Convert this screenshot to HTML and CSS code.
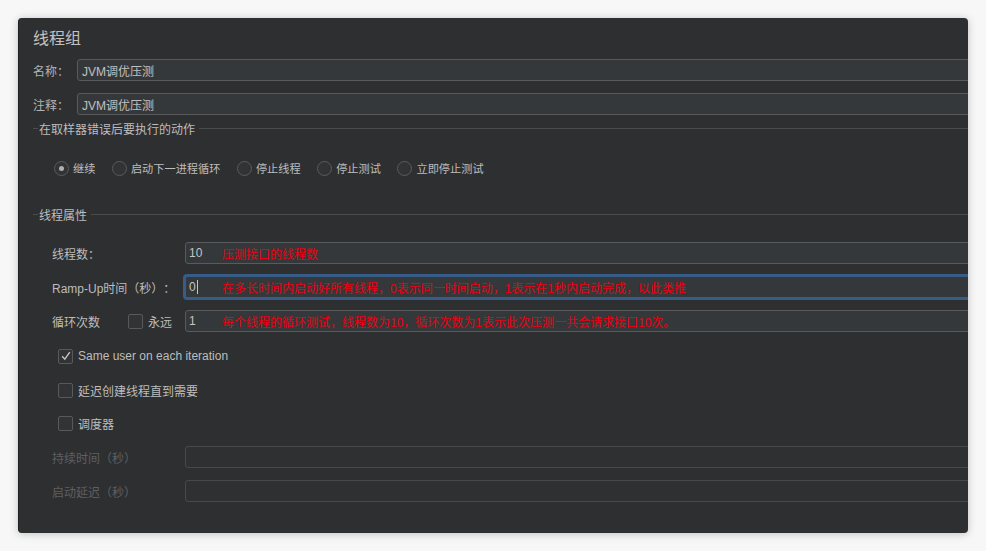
FILE: index.html
```html
<!DOCTYPE html>
<html lang="zh-CN">
<head>
<meta charset="utf-8">
<title>线程组</title>
<link rel="stylesheet" href="styles.css">
</head>
<body>
<div class="window">
  <div class="title">线程组</div>

  <div class="row row-name">
    <span class="label">名称：</span>
    <div class="field"><span class="val">JVM调优压测</span></div>
  </div>
  <div class="row row-comment">
    <span class="label">注释：</span>
    <div class="field"><span class="val">JVM调优压测</span></div>
  </div>

  <div class="legend legend-1"><span class="dash"></span><span class="legend-text">在取样器错误后要执行的动作</span><span class="line"></span></div>

  <div class="radios">
    <span class="radio on"></span><span class="rtext">继续</span>
    <span class="radio"></span><span class="rtext">启动下一进程循环</span>
    <span class="radio"></span><span class="rtext">停止线程</span>
    <span class="radio"></span><span class="rtext">停止测试</span>
    <span class="radio"></span><span class="rtext">立即停止测试</span>
  </div>

  <div class="legend legend-2"><span class="dash"></span><span class="legend-text">线程属性</span><span class="line"></span></div>

  <div class="prow prow-1">
    <span class="plabel">线程数：</span>
    <div class="field pfield"><span class="num">10</span><span class="note">压测接口的线程数</span></div>
  </div>
  <div class="prow prow-2">
    <span class="plabel">Ramp-Up时间（秒）：</span>
    <div class="field pfield focus"><span class="num">0<span class="caret"></span></span><span class="note">在多长时间内启动好所有线程，0表示同一时间启动，1表示在1秒内启动完成，以此类推</span></div>
  </div>
  <div class="prow prow-3">
    <span class="plabel short">循环次数</span>
    <span class="check"></span><span class="ctext forever">永远</span>
    <div class="field pfield"><span class="num">1</span><span class="note">每个线程的循环测试，线程数为10，循环次数为1表示此次压测一共会请求接口10次。</span></div>
  </div>

  <div class="crow crow-1"><span class="check checked"><svg width="12" height="12" viewBox="0 0 12 12"><path d="M2.2 6.3 L4.8 9.2 L9.8 2.2" fill="none" stroke="#c4c4c4" stroke-width="1.4"/></svg></span><span class="ctext">Same user on each iteration</span></div>
  <div class="crow crow-2"><span class="check"></span><span class="ctext">延迟创建线程直到需要</span></div>
  <div class="crow crow-3"><span class="check"></span><span class="ctext">调度器</span></div>

  <div class="prow drow drow-1">
    <span class="plabel disabled">持续时间（秒）</span>
    <div class="field pfield dfield"></div>
  </div>
  <div class="prow drow drow-2">
    <span class="plabel disabled">启动延迟（秒）</span>
    <div class="field pfield dfield"></div>
  </div>
</div>
</body>
</html>
```

FILE: styles.css
```css
* { box-sizing: border-box; }
html, body { margin: 0; padding: 0; }
body {
  background: #f7f7f7;
  font-family: "Liberation Sans", "Noto Sans CJK SC", sans-serif;
  font-size: 12px;
  color: #bdbdbd;
  width: 986px;
  height: 551px;
  overflow: hidden;
  text-spacing-trim: space-all;
}
.window {
  margin: 18px 0 0 18px;
  width: 950px;
  height: 515px;
  background: #2e2f31;
  border-left: 1px solid #1f2021;
  border-radius: 4px;
  box-shadow: 0 1px 9px rgba(0,0,0,0.22);
  overflow: hidden;
  padding-left: 14px;
}
.title {
  font-size: 16px;
  line-height: 20px;
  padding-top: 11px;
  color: #c2c2c2;
}
.row {
  display: flex;
  align-items: center;
  height: 22px;
}
.row-name { margin-top: 10px; }
.row-comment { margin-top: 12px; }
.label {
  width: 44px;
  color: #b4b4b4;
}
.field {
  flex: 1;
  height: 22px;
  margin-right: -10px;
  background: #35383a;
  border: 1px solid #595a5b;
  border-radius: 3px;
  display: flex;
  align-items: center;
  padding-left: 4px;
  color: #c0c0c0;
}
.legend {
  display: flex;
  align-items: center;
  height: 16px;
  color: #bdbdbd;
}
.legend-1 { margin-top: 5px; }
.legend-2 { margin-top: 30px; }
.legend .dash {
  width: 5px;
  height: 1px;
  background: #4a4b4c;
  margin-right: 1px;
}
.legend .line {
  flex: 1;
  height: 1px;
  background: #4a4b4c;
  margin-left: 4px;
}
.radios {
  display: flex;
  align-items: center;
  height: 16px;
  margin-top: 24px;
  padding-left: 21px;
  font-size: 11.2px;
}
.radio {
  width: 15px;
  height: 15px;
  border-radius: 50%;
  border: 1px solid #5a5b5c;
  background: #313335;
  display: inline-flex;
  align-items: center;
  justify-content: center;
  margin-right: 4px;
  flex: none;
}
.radio.on::after {
  content: "";
  width: 5px;
  height: 5px;
  border-radius: 50%;
  background: #b0b0b0;
}
.rtext { margin-right: 16.5px; color: #bdbdbd; }
.prow {
  display: flex;
  align-items: center;
  height: 22px;
  padding-left: 19px;
}
.prow-1 { margin-top: 20px; }
.prow-2 { margin-top: 10px; height: 26px; }
.prow-3 { margin-top: 10px; }
.plabel {
  width: 133px;
  color: #bdbdbd;
  white-space: nowrap;
}
.plabel.short { width: 76px; }
.pfield { padding-left: 3px; }
.focus {
  height: 26px;
  border: 3px solid #375c87;
  border-radius: 4px;
  margin-left: -2px;
}
.num {
  width: 33px;
  display: inline-flex;
  align-items: center;
  color: #c4c4c4;
}
.caret {
  display: inline-block;
  width: 1px;
  height: 14px;
  background: #c4c4c4;
  margin-left: 1px;
}
.note {
  color: #ec0010;
  font-size: 12px;
  white-space: nowrap;
}
.focus .num { width: 33px; }
.check {
  width: 15px;
  height: 15px;
  border: 1px solid #58595a;
  border-radius: 2px;
  background: #323335;
  display: inline-flex;
  align-items: center;
  justify-content: center;
  flex: none;
}
.ctext { margin-left: 5px; color: #bdbdbd; }
.forever { width: 37px; }
.crow {
  display: flex;
  align-items: center;
  height: 16px;
  padding-left: 25px;
}
.crow-1 { margin-top: 16px; }
.crow-2 { margin-top: 18px; }
.crow-3 { margin-top: 17px; }
.drow-1 { margin-top: 15px; }
.drow-2 { margin-top: 12px; }
.disabled { color: #5e5f61; }
.dfield {
  background: #2f3032;
  border-color: #48494a;
}
```
